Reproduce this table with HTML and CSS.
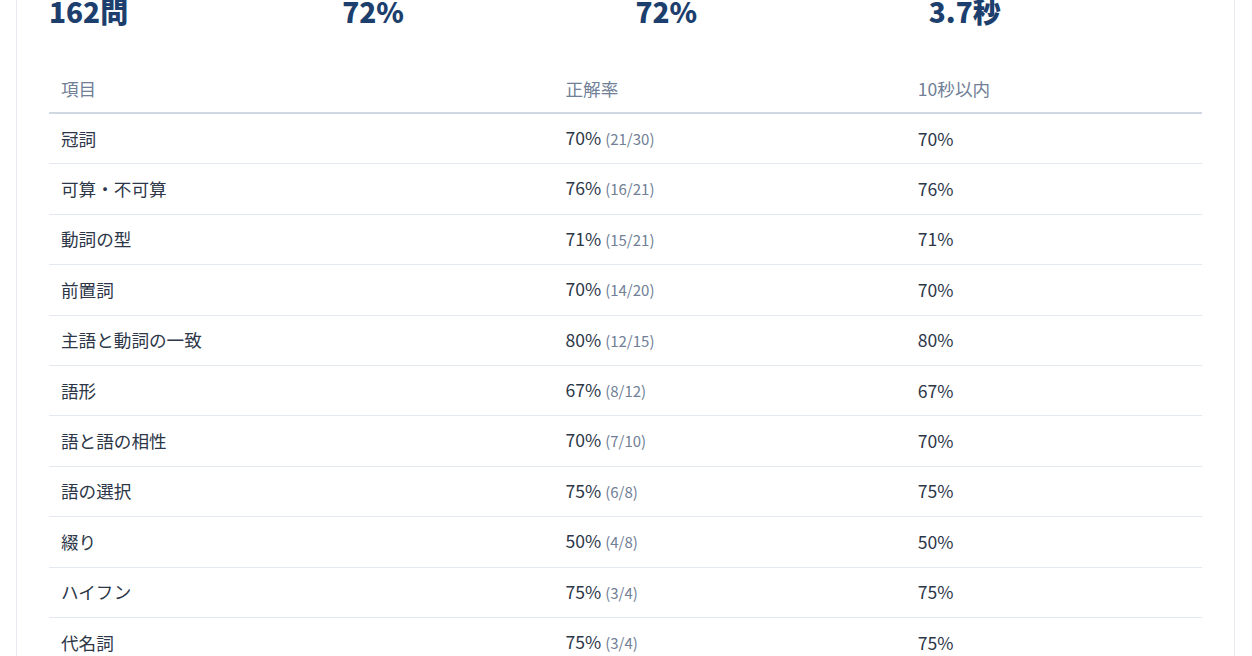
FILE: index.html
```html
<!DOCTYPE html>
<html lang="ja">
<head>
<meta charset="utf-8">
<title>分野別成績</title>
<link rel="stylesheet" href="styles.css">
</head>
<body>
<div class="card">
  <div class="stats">
    <div class="stat"><div class="stat-value">162問</div></div>
    <div class="stat"><div class="stat-value">72%</div></div>
    <div class="stat"><div class="stat-value">72%</div></div>
    <div class="stat"><div class="stat-value">3.7秒</div></div>
  </div>
  <table class="table">
    <colgroup>
      <col class="col-item">
      <col class="col-rate">
      <col class="col-fast">
    </colgroup>
    <thead>
      <tr><th>項目</th><th>正解率</th><th>10秒以内</th></tr>
    </thead>
    <tbody>
      <tr><td>冠詞</td><td>70% <span class="count">(21/30)</span></td><td>70%</td></tr>
      <tr><td>可算・不可算</td><td>76% <span class="count">(16/21)</span></td><td>76%</td></tr>
      <tr><td>動詞の型</td><td>71% <span class="count">(15/21)</span></td><td>71%</td></tr>
      <tr><td>前置詞</td><td>70% <span class="count">(14/20)</span></td><td>70%</td></tr>
      <tr><td>主語と動詞の一致</td><td>80% <span class="count">(12/15)</span></td><td>80%</td></tr>
      <tr><td>語形</td><td>67% <span class="count">(8/12)</span></td><td>67%</td></tr>
      <tr><td>語と語の相性</td><td>70% <span class="count">(7/10)</span></td><td>70%</td></tr>
      <tr><td>語の選択</td><td>75% <span class="count">(6/8)</span></td><td>75%</td></tr>
      <tr><td>綴り</td><td>50% <span class="count">(4/8)</span></td><td>50%</td></tr>
      <tr><td>ハイフン</td><td>75% <span class="count">(3/4)</span></td><td>75%</td></tr>
      <tr><td>代名詞</td><td>75% <span class="count">(3/4)</span></td><td>75%</td></tr>
    </tbody>
  </table>
</div>
</body>
</html>
```

FILE: styles.css
```css
html, body {
  margin: 0;
  padding: 0;
  background: #ffffff;
  font-family: "Noto Sans CJK JP", "Noto Sans", sans-serif;
  color: #2d3748;
}

.card {
  margin: -8px 17px 0 16px;
  border: 1px solid #e6eaf0;
  border-top: none;
  padding: 0 32px 40px 32px;
  background: #ffffff;
}

.stats {
  display: grid;
  grid-template-columns: repeat(4, 1fr);
  gap: 20px;
}

.stat-value {
  font-size: 28px;
  line-height: 38px;
  font-weight: 900;
  color: #1d3f6e;
}

.table {
  width: 100%;
  border-collapse: collapse;
  margin-top: 34px;
  font-size: 17.6px;
}

.col-item { width: 43.75%; }
.col-rate { width: 30.56%; }

.table th {
  text-align: left;
  font-weight: 400;
  color: #718096;
  padding: 13px 12px 11px;
  line-height: 24px;
  border-bottom: 2px solid #cfd8e3;
}

.table td {
  padding: 12px 12px;
  line-height: 24.4px;
  border-bottom: 1px solid #e4e9f0;
}

.count {
  font-size: 15px;
  color: #718096;
}
```
